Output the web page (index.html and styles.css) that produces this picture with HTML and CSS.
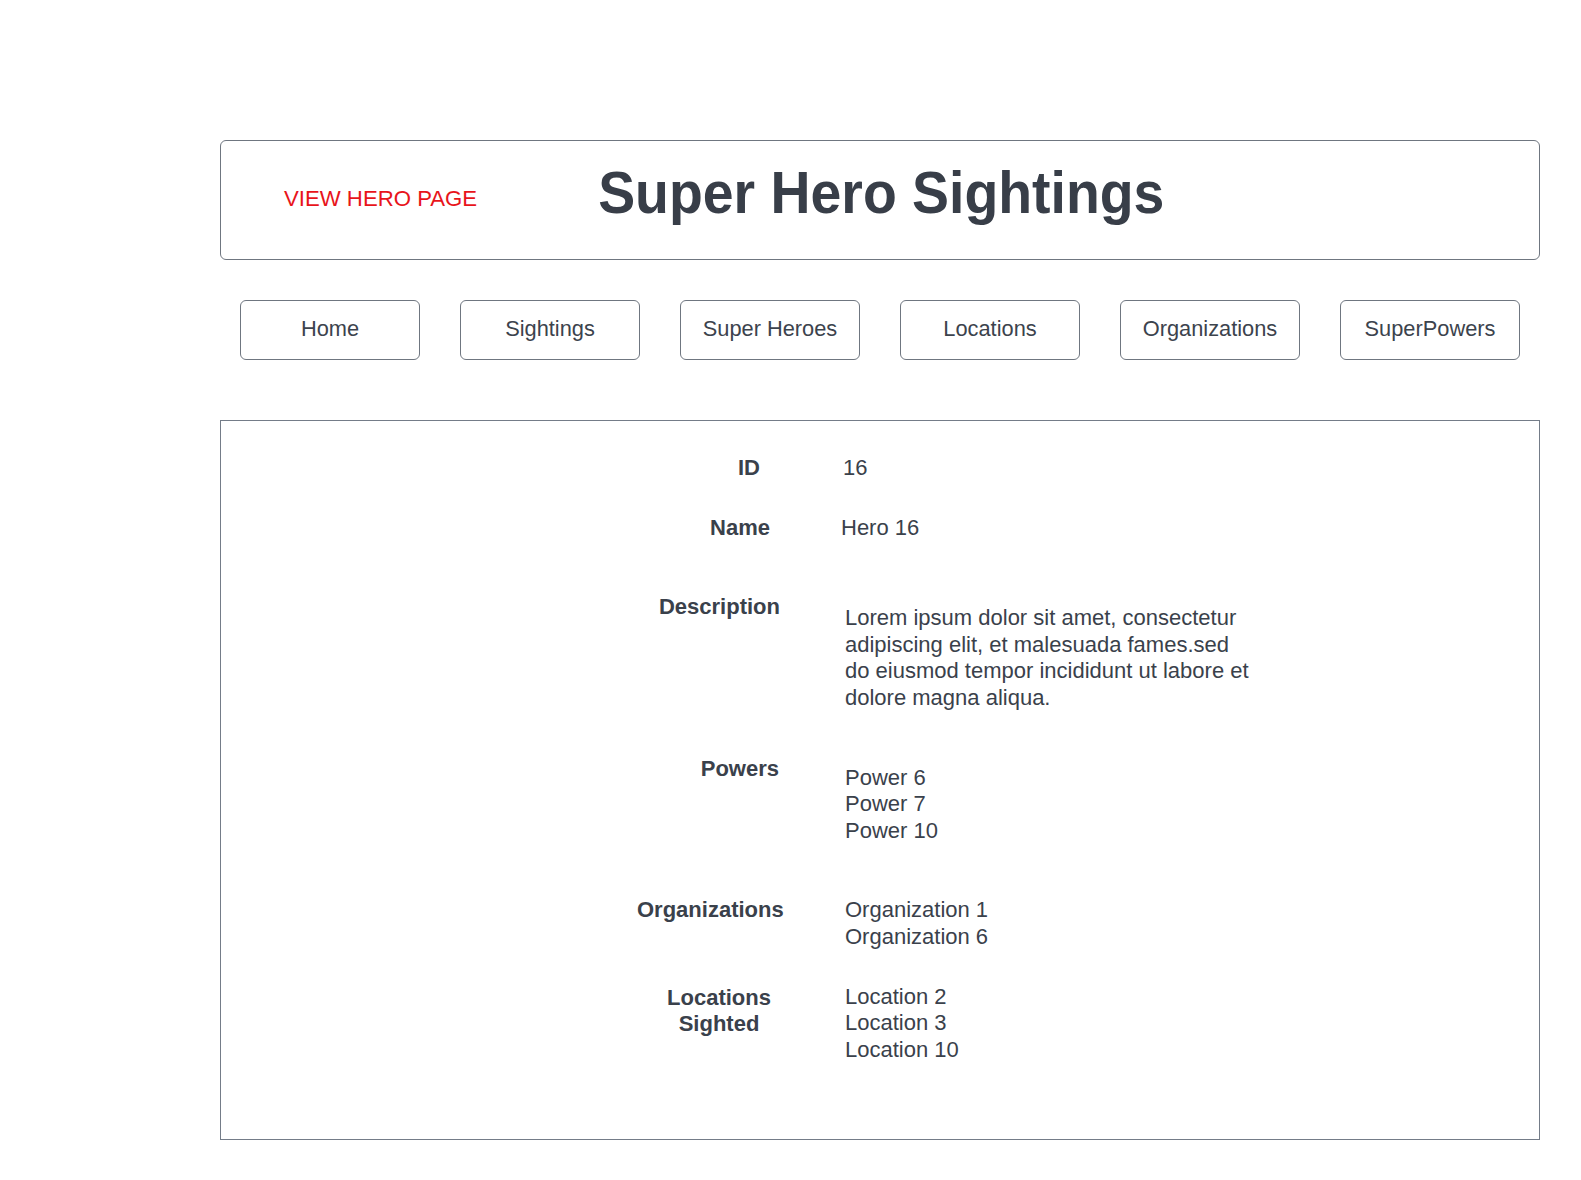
FILE: index.html
```html
<!DOCTYPE html>
<html lang="en">
<head>
<meta charset="utf-8">
<title>Super Hero Sightings - View Hero</title>
<link rel="stylesheet" href="styles.css">
</head>
<body>
<div class="page">
  <header class="header">
    <span class="page-tag">VIEW HERO PAGE</span>
    <h1 class="title">Super Hero Sightings</h1>
  </header>

  <nav class="nav">
    <a class="nav-btn" href="#">Home</a>
    <a class="nav-btn" href="#">Sightings</a>
    <a class="nav-btn" href="#">Super Heroes</a>
    <a class="nav-btn" href="#">Locations</a>
    <a class="nav-btn" href="#">Organizations</a>
    <a class="nav-btn" href="#">SuperPowers</a>
  </nav>

  <section class="details">
    <div class="row row-id">
      <div class="label">ID</div>
      <div class="value">16</div>
    </div>
    <div class="row row-name">
      <div class="label">Name</div>
      <div class="value">Hero 16</div>
    </div>
    <div class="row row-desc">
      <div class="label">Description</div>
      <div class="value desc">Lorem ipsum dolor sit amet, consectetur adipiscing elit, et malesuada fames.sed do eiusmod tempor incididunt ut labore et dolore magna aliqua.</div>
    </div>
    <div class="row row-powers">
      <div class="label">Powers</div>
      <ul class="value list">
        <li>Power 6</li>
        <li>Power 7</li>
        <li>Power 10</li>
      </ul>
    </div>
    <div class="row row-orgs">
      <div class="label">Organizations</div>
      <ul class="value list">
        <li>Organization 1</li>
        <li>Organization 6</li>
      </ul>
    </div>
    <div class="row row-locs">
      <div class="label">Locations<br>Sighted</div>
      <ul class="value list">
        <li>Location 2</li>
        <li>Location 3</li>
        <li>Location 10</li>
      </ul>
    </div>
  </section>
</div>
</body>
</html>
```

FILE: styles.css
```css
* {
  box-sizing: border-box;
}

html, body {
  margin: 0;
  padding: 0;
  background: #ffffff;
}

body {
  font-family: "Liberation Sans", Arial, sans-serif;
  color: #3a414b;
}

.page {
  width: 1320px;
  margin: 140px 0 0 220px;
}

/* Header */
.header {
  height: 120px;
  border: 1px solid #6f7680;
  border-radius: 6px;
  display: flex;
  align-items: center;
  padding-left: 63px;
}

.page-tag {
  font-size: 22.2px;
  line-height: 26px;
  color: #e8141b;
  margin-top: -2px;
}

.title {
  margin: 0 0 16px 121px;
  font-size: 55.4px;
  line-height: 64px;
  font-weight: 700;
  color: #383e48;
  transform: scaleY(1.08);
}

/* Navigation */
.nav {
  display: flex;
  gap: 40px;
  padding: 0 20px;
  margin-top: 40px;
}

.nav-btn {
  width: 180px;
  height: 60px;
  border: 1px solid #6f7680;
  border-radius: 6px;
  display: flex;
  align-items: center;
  justify-content: center;
  padding-bottom: 3px;
  font-size: 21.8px;
  color: #3c434d;
  text-decoration: none;
}

/* Details panel */
.details {
  margin-top: 60px;
  height: 720px;
  border: 1px solid #747c88;
  padding: 34px 0 0 416px;
  font-size: 22px;
  line-height: 26.6px;
}

.row {
  display: grid;
  grid-template-columns: 146px 1fr;
  column-gap: 61px;
  align-items: start;
}

.label {
  font-weight: 700;
  text-align: right;
}

.value {
  margin: 0;
}

.list {
  list-style: none;
  padding: 0;
}

.desc {
  width: 411px;
}

.row-id .label { padding-right: 23px; }
.row-id .value { margin-left: -1px; }

.row-name { margin-top: 33px; }
.row-name .label { padding-right: 13px; }
.row-name .value { margin-left: -3px; }

.row-desc { margin-top: 53px; }
.row-desc .label { padding-right: 3px; }
.row-desc .value { padding-top: 11px; margin-left: 1px; }

.row-powers { margin-top: 44px; }
.row-powers .label { padding-right: 4px; }
.row-powers .value { padding-top: 9px; margin-left: 1px; }

.row-orgs { margin-top: 53px; }
.row-orgs .value { margin-left: 1px; }

.row-locs { margin-top: 33px; }
.row-locs .label {
  text-align: center;
  padding: 1px 2px 0 20px;
}
.row-locs .value { margin-left: 1px; }
```
